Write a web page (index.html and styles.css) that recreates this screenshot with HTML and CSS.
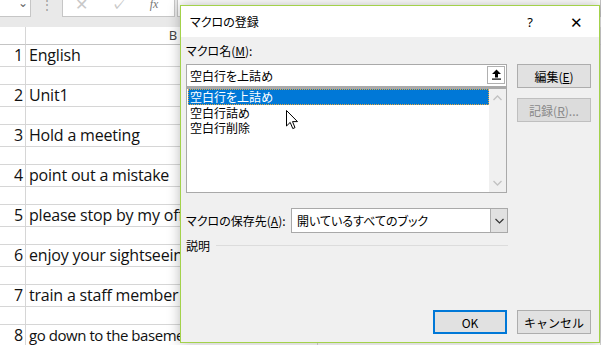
FILE: index.html
```html
<!DOCTYPE html>
<html lang="ja">
<head>
    <meta charset="utf-8" />
    <title>マクロの登録</title>
    <link rel="stylesheet" href="styles.css">
</head>
<body>
    <div class="ribbon">
        <div class="namebox"><span class="caret">&#8964;</span></div>
        <span class="grip">&#8942;</span>
        <div class="fx-tools">
            <span class="tool">&#10005;</span>
            <span class="tool">&#10003;</span>
            <span class="tool fx"><i>fx</i></span>
        </div>
        <div class="formula-input"></div>
    </div>

    <div class="sheet">
        <div class="cell rowhead hdr"></div>
        <div class="cell colhead hdr">B</div>
        <div class="cell hdr"></div>

        <div class="cell rowhead text">1</div><div class="cell text">English</div><div class="cell text"></div>
        <div class="cell rowhead gap"></div><div class="cell gap"></div><div class="cell gap"></div>
        <div class="cell rowhead text">2</div><div class="cell text">Unit1</div><div class="cell text"></div>
        <div class="cell rowhead gap"></div><div class="cell gap"></div><div class="cell gap"></div>
        <div class="cell rowhead text">3</div><div class="cell text">Hold a meeting</div><div class="cell text"></div>
        <div class="cell rowhead gap"></div><div class="cell gap"></div><div class="cell gap"></div>
        <div class="cell rowhead text">4</div><div class="cell text">point out a mistake</div><div class="cell text"></div>
        <div class="cell rowhead gap"></div><div class="cell gap"></div><div class="cell gap"></div>
        <div class="cell rowhead text">5</div><div class="cell text">please stop by my office</div><div class="cell text"></div>
        <div class="cell rowhead gap"></div><div class="cell gap"></div><div class="cell gap"></div>
        <div class="cell rowhead text">6</div><div class="cell text">enjoy your sightseeing</div><div class="cell text"></div>
        <div class="cell rowhead gap"></div><div class="cell gap"></div><div class="cell gap"></div>
        <div class="cell rowhead text">7</div><div class="cell text">train a staff member</div><div class="cell text"></div>
        <div class="cell rowhead gap"></div><div class="cell gap"></div><div class="cell gap"></div>
        <div class="cell rowhead text">8</div><div class="cell text narrow">go down to the basement</div><div class="cell text"></div>
    </div>

    <!-- dialog window floats over the sheet -->
    <div class="dialog">
        <div class="titlebar">
            <span class="title">マクロの登録</span>
            <span class="tb-btn help">?</span>
            <span class="tb-btn close">&#10005;</span>
        </div>
        <div class="dlg-body">
            <div class="main">
                <div class="leftcol">
                    <div class="lbl">マクロ名(<u>M</u>):</div>
                    <div class="namefield">
                        <span class="value">空白行を上詰め</span>
                        <span class="upbtn">
                            <svg width="11" height="11" viewBox="0 0 11 11">
                                <path d="M5.5 0.5 L10 5 L7 5 L7 8.5 L4 8.5 L4 5 L1 5 Z" fill="#000"/>
                                <rect x="1" y="9.5" width="9" height="1.2" fill="#000"/>
                            </svg>
                        </span>
                    </div>
                    <div class="listbox">
                        <ul class="items">
                            <li class="sel">空白行を上詰め</li>
                            <li>空白行詰め</li>
                            <li>空白行削除</li>
                        </ul>
                        <div class="vscroll">
                            <svg width="9" height="6" viewBox="0 0 9 6"><path d="M0.5 5 L4.5 1 L8.5 5" fill="none" stroke="#c2c2c2" stroke-width="1.3"/></svg>
                            <svg width="9" height="6" viewBox="0 0 9 6"><path d="M0.5 1 L4.5 5 L8.5 1" fill="none" stroke="#c2c2c2" stroke-width="1.3"/></svg>
                        </div>
                    </div>
                </div>
                <div class="rightcol">
                    <button class="btn">編集(<u>E</u>)</button>
                    <button class="btn" disabled>記録(<u>R</u>)...</button>
                </div>
            </div>

            <div class="storerow">
                <span class="store-lbl">マクロの保存先(<u>A</u>):</span>
                <div class="combo">
                    <span class="value">開いているすべてのブック</span>
                    <span class="dropbtn">
                        <svg width="9" height="6" viewBox="0 0 9 6"><path d="M0.5 1 L4.5 5 L8.5 1" fill="none" stroke="#333" stroke-width="1.2"/></svg>
                    </span>
                </div>
            </div>

            <div class="descrow">
                <span>説明</span>
                <span class="rule"></span>
            </div>

            <div class="footer">
                <button class="btn primary">OK</button>
                <button class="btn">キャンセル</button>
            </div>
        </div>
    </div>

    <svg class="cursor" width="13" height="20" viewBox="0 0 13 20">
        <path d="M0.5 0.5 L0.5 16 L4.2 12.4 L6.8 18.6 L9 17.6 L6.5 11.6 L11.5 11.6 Z" fill="#fff" stroke="#000" stroke-width="1"/>
    </svg>
</body>
</html>
```

FILE: styles.css
```css
body {
    margin: 0;
    width: 601px;
    height: 345px;
    overflow: hidden;
    position: relative;
    background: #ffffff;
    font-family: "Open Sans", "Noto Sans", sans-serif;
}

/* formula bar strip */
.ribbon {
    height: 27px;
    background: #e9e9e9;
    display: flex;
    align-items: flex-start;
}

.namebox {
    width: 31px;
    height: 17px;
    box-sizing: border-box;
    background: #ffffff;
    border-right: 1px solid #c6c6c6;
    border-bottom: 1px solid #c6c6c6;
    position: relative;
}

.caret {
    position: absolute;
    left: 18px;
    top: -6px;
    font-size: 12px;
    color: #666;
}

.grip {
    width: 31px;
    text-align: center;
    font-size: 12px;
    line-height: 10px;
    color: #9a9a9a;
}

.fx-tools {
    width: 113px;
    height: 17px;
    box-sizing: border-box;
    background: #ffffff;
    border: 1px solid #c6c6c6;
    border-top: none;
    display: flex;
    align-items: center;
    justify-content: space-around;
    padding-right: 4px;
}

.tool {
    font-size: 16px;
    line-height: 10px;
    color: #c8c8c8;
    margin-top: -8px;
}

.tool.fx {
    font-family: "Liberation Serif", serif;
    color: #777;
    font-size: 12px;
}

.formula-input {
    flex: 1;
    height: 17px;
    margin-left: 2px;
    box-sizing: border-box;
    background: #ffffff;
    border: 1px solid #c6c6c6;
    border-top: none;
}

/* sheet grid */
.sheet {
    display: grid;
    grid-template-columns: 26px 292px 1fr;
}

.cell {
    box-sizing: border-box;
    border-bottom: 1px solid #d6d6d6;
    border-right: 1px solid #d6d6d6;
    font-size: 16px;
    letter-spacing: -0.2px;
    color: #111;
    white-space: nowrap;
    overflow: hidden;
    padding-left: 3px;
}

.hdr {
    height: 18px;
    border-bottom-color: #c4c4c4;
}

.colhead {
    text-align: center;
    font-size: 13px;
    line-height: 17px;
    color: #444;
    font-family: "Noto Sans", sans-serif;
    letter-spacing: 0;
}

.text {
    height: 22px;
    line-height: 21px;
}

.gap {
    height: 18px;
}

.rowhead {
    text-align: right;
    padding-left: 0;
    padding-right: 2px;
}

.narrow {
    font-size: 15px;
    letter-spacing: -0.45px;
}

/* dialog */
.dialog {
    position: absolute;
    left: 180px;
    top: 5px;
    width: 420px;
    height: 338px;
    box-sizing: border-box;
    border: 1px solid #a3d24a;
    background: #f0f0f0;
    box-shadow: 0 0 12px rgba(0, 0, 0, 0.28);
    display: flex;
    flex-direction: column;
    font-family: "Noto Sans CJK JP", "Noto Sans", sans-serif;
    font-size: 12px;
    font-feature-settings: "palt";
    color: #000;
}

.titlebar {
    height: 31px;
    background: #ffffff;
    display: flex;
    align-items: center;
}

.title {
    flex: 1;
    padding-left: 9px;
}

.tb-btn {
    width: 46px;
    text-align: center;
}

.help {
    font-family: "Noto Sans", sans-serif;
    font-size: 13px;
}

.close {
    font-size: 15px;
    font-weight: 300;
}

.dlg-body {
    flex: 1;
    display: flex;
    flex-direction: column;
    padding: 7px 8px 8px 5px;
}

.main {
    display: flex;
    gap: 10px;
}

.leftcol {
    width: 322px;
}

.lbl {
    line-height: 14px;
    margin-bottom: 6px;
}

u {
    text-decoration-thickness: 1px;
    text-underline-offset: 1px;
}

.namefield {
    height: 23px;
    box-sizing: border-box;
    border: 1px solid #a9a9a9;
    background: #ffffff;
    display: flex;
    align-items: center;
    justify-content: space-between;
    padding-left: 3px;
    padding-right: 1px;
}

.upbtn {
    width: 18px;
    height: 18px;
    box-sizing: border-box;
    border: 1px solid #b0b0b0;
    background: #ffffff;
    display: flex;
    align-items: center;
    justify-content: center;
    margin-bottom: 2px;
}

.listbox {
    height: 106px;
    box-sizing: border-box;
    border: 1px solid #a9a9a9;
    border-top-width: 2px;
    background: #ffffff;
    display: flex;
}

.items {
    flex: 1;
    list-style: none;
    margin: 0;
    padding: 0 0 0 1px;
}

.items li {
    height: 15px;
    line-height: 15px;
    padding-left: 2px;
}

.items li.sel {
    height: 16px;
    box-sizing: border-box;
    background: #0078d7;
    color: #ffffff;
    outline: 1px dotted #e6a63c;
    outline-offset: -1px;
}

.vscroll {
    width: 17px;
    background: #f0f0f0;
    display: flex;
    flex-direction: column;
    align-items: center;
    justify-content: space-between;
    padding: 6px 0 6px;
}

.rightcol {
    display: flex;
    flex-direction: column;
    gap: 10px;
    padding-top: 20px;
}

.btn {
    width: 74px;
    height: 24px;
    box-sizing: border-box;
    background: #e1e1e1;
    border: 1px solid #adadad;
    font-family: inherit;
    font-size: 12px;
    color: #000;
    padding: 0;
}

.btn:disabled {
    color: #8a8a8a;
    border-color: #bfbfbf;
    background: #dcdcdc;
}

.btn.primary {
    border: 2px solid #0078d7;
}

.storerow {
    display: flex;
    align-items: center;
    justify-content: space-between;
    width: 322px;
    margin-top: 15px;
}

.store-lbl {
    line-height: 14px;
}

.combo {
    width: 217px;
    height: 25px;
    box-sizing: border-box;
    border: 1px solid #a9a9a9;
    background: #ffffff;
    display: flex;
    align-items: center;
    justify-content: space-between;
    padding-left: 5px;
}

.dropbtn {
    width: 17px;
    height: 23px;
    box-sizing: border-box;
    background: #e1e1e1;
    border-left: 1px solid #adadad;
    display: flex;
    align-items: center;
    justify-content: center;
}

.descrow {
    display: flex;
    align-items: center;
    gap: 6px;
    width: 322px;
    margin-top: 4px;
    height: 16px;
}

.rule {
    flex: 1;
    height: 1px;
    background: #dcdcdc;
}

.footer {
    margin-top: auto;
    display: flex;
    justify-content: flex-end;
    gap: 10px;
}

.cursor {
    position: absolute;
    left: 286px;
    top: 110px;
}
```
